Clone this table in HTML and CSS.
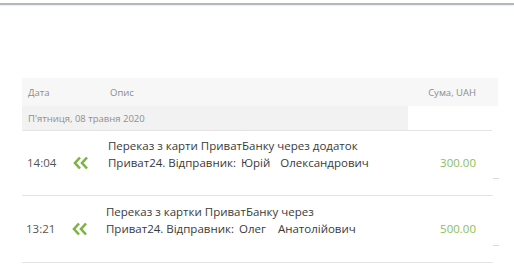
FILE: index.html
```html
<!DOCTYPE html>
<html lang="uk">
<head>
<meta charset="utf-8">
<link rel="stylesheet" href="styles.css">
</head>
<body>
<div class="topbar"></div>
<div class="table">
  <div class="thead">
    <span class="c-date">Дата</span>
    <span class="c-desc">Опис</span>
    <span class="c-sum">Сума, UAH</span>
  </div>
  <div class="day">
    <span class="day-label">П'ятниця, 08 травня 2020</span>
  </div>
  <div class="row">
    <span class="time">14:04</span>
    <span class="icon"><svg width="16" height="14" viewBox="0 0 16 14"><path d="M7 1.5 L2 7 L7 12.5 M14 1.5 L9 7 L14 12.5" fill="none" stroke="#7cb342" stroke-width="2.6"/></svg></span>
    <div class="desc">
      <div>Переказ з карти ПриватБанку через додаток</div>
      <div>Приват24. Відправник:<span class="n1">Юрій</span><span class="n2">Олександрович</span></div>
    </div>
    <span class="amount">300.00</span>
    <span class="tick"></span>
  </div>
  <div class="row row2">
    <span class="time">13:21</span>
    <span class="icon"><svg width="16" height="14" viewBox="0 0 16 14"><path d="M7 1.5 L2 7 L7 12.5 M14 1.5 L9 7 L14 12.5" fill="none" stroke="#7cb342" stroke-width="2.6"/></svg></span>
    <div class="desc">
      <div>Переказ з картки ПриватБанку через</div>
      <div>Приват24. Відправник:<span class="n1">Олег</span><span class="n2 n2b">Анатолійович</span></div>
    </div>
    <span class="amount">500.00</span>
    <span class="tick"></span>
  </div>
</div>
</body>
</html>
```
FILE: styles.css
```css
html, body {
  margin: 0;
  padding: 0;
  background: #fff;
}
body {
  font-family: "Open Sans", "Liberation Sans", sans-serif;
  width: 514px;
  height: 279px;
  overflow: hidden;
}
.topbar {
  height: 3px;
  border-bottom: 2px solid #b3b7be;
  background: #fff;
  box-shadow: 0 1px 2px #e6eef8;
}
.table {
  margin: 73px 0 0 22px;
  width: 476px;
}
.thead {
  display: flex;
  align-items: center;
  height: 28px;
  background: #f7f7f7;
  font-size: 9.5px;
  color: #8c8c8c;
}
.c-date { margin-left: 6px; width: 82px; }
.c-desc { flex: 1; }
.c-sum { margin-right: 22px; }
.day {
  height: 24px;
  width: 470px;
  border-bottom: 1px solid #e4e4e4;
  display: flex;
}
.day-label {
  display: flex;
  align-items: center;
  width: 380px;
  padding-left: 6px;
  background: #f2f2f2;
  font-size: 9.5px;
  color: #8f8f8f;
}
.row {
  position: relative;
  display: flex;
  align-items: flex-start;
  box-sizing: border-box;
  height: 65px;
  padding-top: 6px;
  width: 471px;
  border-bottom: 1px solid #e4e4e4;
  font-size: 11.5px;
  line-height: 17px;
}
.row2 {
  height: 67px;
  padding-top: 7px;
}
.time {
  width: 46px;
  padding-left: 5px;
  color: #555;
  margin-top: 17px;
}
.icon {
  width: 35px;
  height: 17px;
  margin-top: 17px;
  display: flex;
  align-items: center;
}
.desc {
  flex: 1;
  color: #3a3a3a;
}
.n1 { margin-left: 5px; }
.n2 { margin-left: 10px; }
.n2b { margin-left: 12px; }
.amount {
  color: #8bbd55;
  margin-right: 17px;
  margin-top: 17px;
}
.tick {
  position: absolute;
  right: -6px;
  bottom: 16px;
  width: 6px;
  height: 1px;
  background: #d8d8d8;
}
.row2 .time { margin-left: -1px; }
.row2 .desc { margin-left: -1px; }
```
